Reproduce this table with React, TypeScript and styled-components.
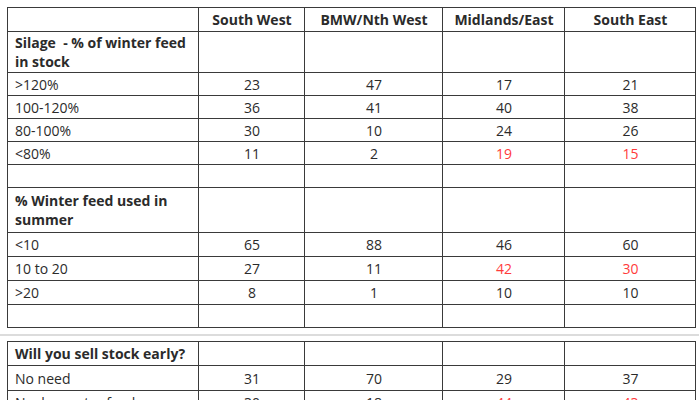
import styled, { createGlobalStyle } from 'styled-components';

const GlobalStyle = createGlobalStyle`
  html, body {
    margin: 0;
    padding: 0;
    background: #ffffff;
  }
  body {
    font-family: "Open Sans", Lato, sans-serif;
    color: #2b2b2b;
    overflow: hidden;
  }
`

type Value = string | { v: string; red?: boolean }

type RowData = {
  label: string
  bold?: boolean
  height: number
  values: Value[]
}

const regions = ['South West', 'BMW/Nth West', 'Midlands/East', 'South East']

const feedRows: RowData[] = [
  { label: 'Silage  - % of winter feed in stock', bold: true, height: 40, values: ['', '', '', ''] },
  { label: '>120%', height: 22, values: ['23', '47', '17', '21'] },
  { label: '100-120%', height: 22, values: ['36', '41', '40', '38'] },
  { label: '80-100%', height: 22, values: ['30', '10', '24', '26'] },
  { label: '<80%', height: 22, values: ['11', '2', { v: '19', red: true }, { v: '15', red: true }] },
  { label: '', height: 22, values: ['', '', '', ''] },
  { label: '% Winter feed used in summer', bold: true, height: 44, values: ['', '', '', ''] },
  { label: '<10', height: 23, values: ['65', '88', '46', '60'] },
  { label: '10 to 20', height: 23, values: ['27', '11', { v: '42', red: true }, { v: '30', red: true }] },
  { label: '>20', height: 23, values: ['8', '1', '10', '10'] },
  { label: '', height: 22, values: ['', '', '', ''] },
]

const stockRows: RowData[] = [
  { label: 'Will you sell stock early?', bold: true, height: 23, values: ['', '', '', ''] },
  { label: 'No need', height: 24, values: ['31', '70', '29', '37'] },
  { label: 'No, buy extra feed', height: 23, values: ['30', '18', { v: '44', red: true }, { v: '43', red: true }] },
]

function DataRows({ rows }: { rows: RowData[] }) {
  return (
    <>
      {rows.map((row, i) => (
        <Row key={i} $h={row.height}>
          <Cell $bold={row.bold}>{row.label}</Cell>
          {row.values.map((val, j) => {
            const item = typeof val === 'string' ? { v: val } : val
            return (
              <Cell key={j} $center $red={item.red}>{item.v}</Cell>
            )
          })}
        </Row>
      ))}
    </>
  )
}

export default function App() {
  return (
    <>
      <GlobalStyle />
      <Page>
        <Table>
          <Row $h={23}>
            <Cell />
            {regions.map((r) => (
              <Cell key={r} $center $bold>{r}</Cell>
            ))}
          </Row>
          <DataRows rows={feedRows} />
        </Table>
        <Separator />
        <Table>
          <DataRows rows={stockRows} />
        </Table>
      </Page>
    </>
  )
}

const Page = styled.div`
  padding: 7px 0 0 7px;
  width: 699px;
  height: 400px;
  box-sizing: border-box;
`

const Table = styled.div`
  display: flex;
  flex-direction: column;
  gap: 1px;
  padding: 1px;
  width: max-content;
  background: #3a3a3a;
`

const Row = styled.div<{ $h: number }>`
  display: grid;
  grid-template-columns: 190px 105px 137px 121px 130px;
  gap: 1px;
  height: ${(p) => p.$h}px;
`

const Cell = styled.div<{ $bold?: boolean; $center?: boolean; $red?: boolean }>`
  background: #ffffff;
  display: flex;
  align-items: center;
  justify-content: ${(p) => (p.$center ? 'center' : 'flex-start')};
  text-align: ${(p) => (p.$center ? 'center' : 'left')};
  padding: 0 6px 0 7px;
  font-size: 14px;
  line-height: 19px;
  font-weight: ${(p) => (p.$bold ? 700 : 400)};
  color: ${(p) => (p.$red ? '#ff3b3b' : '#2b2b2b')};
  white-space: pre-wrap;
`

const Separator = styled.div`
  height: 2px;
  background: #dcdcdc;
  margin: 6px 0 5px -7px;
  width: 699px;
`
